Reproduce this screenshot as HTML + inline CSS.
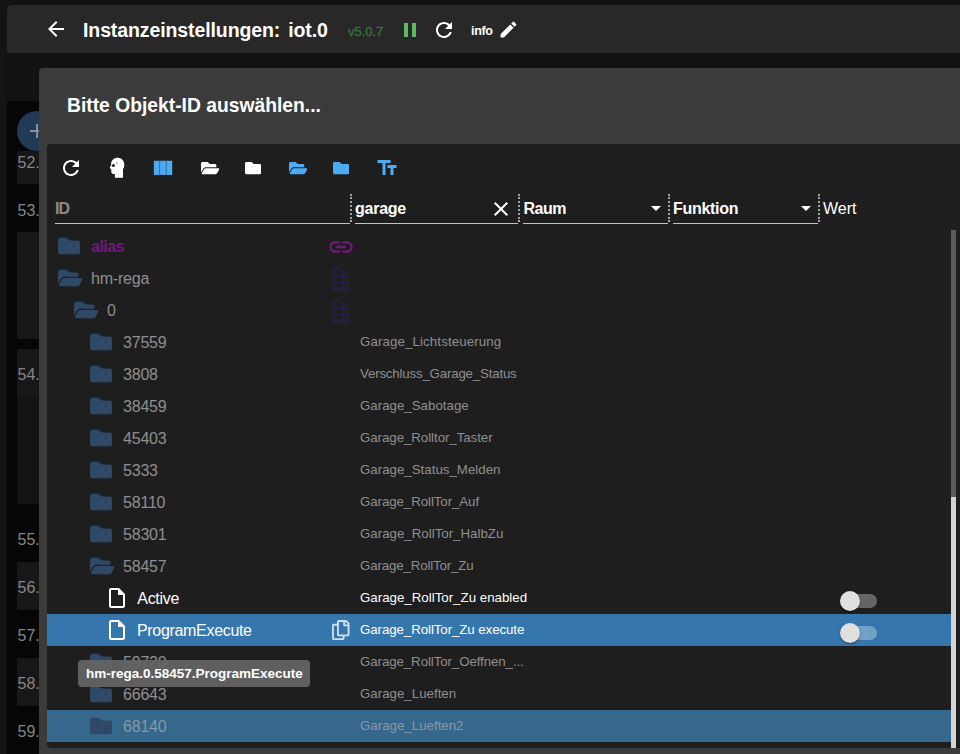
<!DOCTYPE html>
<html lang="de">
<head>
<meta charset="utf-8">
<title>Instanzeinstellungen: iot.0</title>
<style>
*{box-sizing:border-box;margin:0;padding:0}
html,body{width:960px;height:754px;overflow:hidden;background:#141414;font-family:"Liberation Sans",sans-serif;color:#fff}
.abs{position:absolute}
svg{display:block;position:absolute}
/* background page (dimmed by overlay) */
#page{position:absolute;left:7px;top:0;width:953px;height:754px;background:#121212}
#topbar{position:absolute;left:7px;top:5px;width:953px;height:48px;background:#282828;border-radius:4px 0 0 0}
#topbar .title{position:absolute;left:76px;top:12.500px;font-weight:bold;font-size:19.500px;line-height:24px;letter-spacing:-.1px;word-spacing:2.600px;white-space:nowrap}
#topbar .ver{position:absolute;left:341px;top:19px;font-size:13px;line-height:16px;color:#33753a;white-space:nowrap;letter-spacing:-0.05px;-webkit-text-stroke:.3px #33753a}
#topbar .info{position:absolute;left:464px;top:18px;font-size:12.5px;line-height:16px;font-weight:bold;letter-spacing:-0.3px;white-space:nowrap}
#list{position:absolute;left:7px;top:101px;width:60px;height:653px;background:#060606}
.li{position:absolute;left:10px;width:60px;background:#171717}
.num{position:absolute;left:10.500px;width:40px;font-size:16px;line-height:20px;color:#858585;white-space:nowrap}
#fab{position:absolute;left:17px;top:111px;width:40px;height:40px;border-radius:50%;background:#213a55}
/* dialog */
#dlg{position:absolute;left:39px;top:68px;width:940px;height:700px;background:#3b3b3b;border-radius:4px}
#dlg .dtitle{position:absolute;left:28px;top:26px;font-weight:bold;font-size:19.300px;line-height:24px;letter-spacing:0;white-space:nowrap}
#panel{position:absolute;left:47px;top:144px;width:930px;height:604px;background:#1e1e1e;border-radius:4px}
.hd{position:absolute;top:199px;font-size:16px;line-height:20px;font-weight:bold;white-space:nowrap}
.ul{position:absolute;top:223px;height:1px;background:#c2c2c2}
.sep{position:absolute;top:194px;height:28px;width:0;border-left:2px dotted #a4a4a4}
.row{position:absolute;left:47px;width:904px;height:32px}
.row .t{position:absolute;top:7px;font-size:16px;line-height:20px;white-space:nowrap;color:#8f8f8f;letter-spacing:-.2px}
.row .n{position:absolute;left:313px;top:7px;font-size:13.3px;line-height:18px;white-space:nowrap;color:#8f8f8f}
.fi{fill:#2f4866}
.sw{position:absolute;left:796px;top:12px;width:34px;height:14px;border-radius:7px;background:#656565}
.sw i{position:absolute;left:-3px;top:-3px;width:20px;height:20px;border-radius:50%;background:#e0e0e0;box-shadow:0 1px 2px rgba(0,0,0,.5)}
#tip{position:absolute;left:78px;top:660px;width:232px;height:27px;border-radius:4px;background:rgba(100,100,100,.94);font-size:13.5px;font-weight:bold;line-height:27px;padding-left:8px;white-space:nowrap;letter-spacing:0}
</style>
</head>
<body>
<div id="page"></div>
<div id="topbar">
<svg style="left:37px;top:12px" width="24" height="24" viewBox="0 0 24 24"><path fill="#fff" d="M20 11H7.83l5.590-5.590L12 4l-8 8 8 8 1.410-1.410L7.830 13H20v-2z"/></svg>
<div class="title">Instanzeinstellungen: iot.0</div>
<div class="ver">v5.0.7</div>
<svg style="left:391px;top:13px" width="24" height="24" viewBox="0 0 24 24"><path fill="#5fb964" d="M6 19h4V5H6v14zm8-14v14h4V5h-4z"/></svg>
<svg style="left:425px;top:13px" width="24" height="24" viewBox="0 0 24 24"><path fill="#fff" d="M17.650 6.350C16.200 4.900 14.210 4 12 4c-4.420 0-7.990 3.580-7.990 8s3.570 8 7.990 8c3.730 0 6.840-2.550 7.730-6h-2.080c-.82 2.330-3.040 4-5.650 4-3.310 0-6-2.690-6-6s2.690-6 6-6c1.660 0 3.140.69 4.220 1.780L13 11h7V4l-2.350 2.350z"/></svg>
<div class="info">info</div>
<svg style="left:491.400px;top:14.400px" width="21" height="21" viewBox="0 0 24 24"><path fill="#fff" d="M3 17.250V21h3.750L17.810 9.940l-3.750-3.750L3 17.250zM20.710 7.040c.39-.39.39-1.020 0-1.410l-2.340-2.340c-.39-.39-1.020-.39-1.410 0l-1.830 1.830 3.750 3.750 1.830-1.830z"/></svg>
</div>
<div id="list">
<div class="li" style="top:50px;height:33px"></div>
<div class="li" style="top:131px;height:107px"></div>
<div class="li" style="top:248px;height:48px"></div>
<div class="li" style="top:296px;height:107px;background:#141414"></div>
<div class="li" style="top:461px;height:48px"></div>
<div class="li" style="top:557px;height:48px"></div>
<div class="num" style="top:51.5px">52.</div>
<div class="num" style="top:99.5px">53.</div>
<div class="num" style="top:263.5px">54.</div>
<div class="num" style="top:428.5px">55.</div>
<div class="num" style="top:476.5px">56.</div>
<div class="num" style="top:524.5px">57.</div>
<div class="num" style="top:572.5px">58.</div>
<div class="num" style="top:620.5px">59.</div>
</div>
<div id="fab"><svg style="left:8px;top:8px" width="24" height="24" viewBox="0 0 24 24"><path fill="#8a8f95" d="M19 13h-6v6h-2v-6H5v-2h6V5h2v6h6v2z"/></svg></div>
<div id="dlg"><div class="dtitle">Bitte Objekt-ID auswählen...</div></div>
<div id="panel"></div>
<svg style="left:59px;top:156px" width="24" height="24" viewBox="0 0 24 24"><path fill="#fff" d="M17.650 6.350C16.200 4.900 14.210 4 12 4c-4.420 0-7.990 3.580-7.990 8s3.570 8 7.990 8c3.730 0 6.840-2.550 7.730-6h-2.080c-.82 2.330-3.040 4-5.650 4-3.310 0-6-2.690-6-6s2.690-6 6-6c1.660 0 3.140.69 4.220 1.780L13 11h7V4l-2.350 2.350z"/></svg>
<svg style="left:108px;top:156px" width="18" height="24" viewBox="0 0 18 24"><path fill="#fff" d="M3.100 8C3.100 4.200 6 1.700 9.700 1.700C13.600 1.700 16.300 4.800 16.300 8.700C16.300 10.500 15.900 12 15 13V21.700H6.900V18C5 18 3.600 17.900 3.400 16.500L3.100 13C2.300 12.800 1.700 12 1.900 11.200C2.100 10.300 2.600 10 3.100 10Z"/><circle cx="5.450" cy="9.600" r="1.500" fill="#1e1e1e"/><circle cx="8.850" cy="7.250" r=".650" fill="#555"/></svg>
<svg style="left:153px;top:160px" width="20" height="16" viewBox="0 0 20 16"><rect x=".800" y=".750" width="18.400" height="14.150" fill="#4dabf5"/><rect x="6.200" y=".750" width="1" height="14.150" fill="#2f6a96"/><rect x="12.700" y=".750" width="1" height="14.150" fill="#2f6a96"/></svg>
<svg style="left:200.5px;top:159.800px" width="18.450" height="16.400" viewBox="0 0 576 512"><path fill="#fff" d="M572.694 292.093L500.270 416.248A63.997 63.997 0 0 1 444.989 448H45.025c-18.523 0-30.064-20.093-20.731-36.093l72.424-124.155A64 64 0 0 1 152 256h399.964c18.523 0 30.064 20.093 20.730 36.093zM152 224h328v-48c0-26.510-21.490-48-48-48H272l-64-64H48C21.490 64 0 85.490 0 112v278.046l69.077-118.418C86.214 242.250 117.989 224 152 224z"/></svg>
<svg style="left:244.6px;top:159.800px" width="16.400" height="16.400" viewBox="0 0 512 512"><path fill="#fff" d="M464 128H272l-64-64H48C21.490 64 0 85.490 0 112v288c0 26.510 21.490 48 48 48h416c26.510 0 48-21.490 48-48V176c0-26.510-21.490-48-48-48z"/></svg>
<svg style="left:288.5px;top:159.800px" width="18.450" height="16.400" viewBox="0 0 576 512"><path fill="#4dabf5" d="M572.694 292.093L500.270 416.248A63.997 63.997 0 0 1 444.989 448H45.025c-18.523 0-30.064-20.093-20.731-36.093l72.424-124.155A64 64 0 0 1 152 256h399.964c18.523 0 30.064 20.093 20.730 36.093zM152 224h328v-48c0-26.510-21.490-48-48-48H272l-64-64H48C21.490 64 0 85.490 0 112v278.046l69.077-118.418C86.214 242.250 117.989 224 152 224z"/></svg>
<svg style="left:332.9px;top:159.800px" width="16.400" height="16.400" viewBox="0 0 512 512"><path fill="#4dabf5" d="M464 128H272l-64-64H48C21.490 64 0 85.490 0 112v288c0 26.510 21.490 48 48 48h416c26.510 0 48-21.490 48-48V176c0-26.510-21.490-48-48-48z"/></svg>
<svg style="left:375px;top:156px" width="24" height="24" viewBox="0 0 24 24"><path fill="#4dabf5" d="M2.500 4v3h5v12h3V7h5V4h-13zm19 5h-9v3h3v7h3v-7h3V9z"/></svg>
<div class="hd" style="left:55px;color:#8d8d8d;letter-spacing:-.9px">ID</div>
<div class="ul" style="left:55px;width:295px"></div>
<div class="sep" style="left:350px"></div>
<div class="hd" style="left:355px;letter-spacing:-.25px">garage</div>
<svg style="left:489px;top:197px" width="24" height="24" viewBox="0 0 24 24"><path fill="#fff" d="M19 6.410L17.590 5 12 10.590 6.410 5 5 6.410 10.590 12 5 17.590 6.410 19 12 13.410 17.590 19 19 17.590 13.410 12z"/></svg>
<div class="ul" style="left:355px;width:163px"></div>
<div class="sep" style="left:518px"></div>
<div class="hd" style="left:523.500px;letter-spacing:-.5px">Raum</div>
<svg style="left:644px;top:196px" width="24" height="24" viewBox="0 0 24 24"><path fill="#fff" d="M7 10l5 5 5-5z"/></svg>
<div class="ul" style="left:523px;width:145px"></div>
<div class="sep" style="left:668px"></div>
<div class="hd" style="left:673px;letter-spacing:-.3px">Funktion</div>
<svg style="left:794px;top:196px" width="24" height="24" viewBox="0 0 24 24"><path fill="#fff" d="M7 10l5 5 5-5z"/></svg>
<div class="ul" style="left:673px;width:145px"></div>
<div class="sep" style="left:818px"></div>
<div class="hd" style="left:823px;font-weight:normal;font-size:16px">Wert</div>
<div class="row" style="top:230px"><svg style="left:11px;top:5px" width="22" height="22" viewBox="0 0 512 512"><path class="fi" d="M464 128H272l-64-64H48C21.490 64 0 85.490 0 112v288c0 26.510 21.490 48 48 48h416c26.510 0 48-21.490 48-48V176c0-26.510-21.490-48-48-48z"/></svg><div class="t" style="left:44px;color:#70197a;font-weight:bold;letter-spacing:-.5px">alias</div><svg style="left:280.100px;top:3px" width="28" height="28" viewBox="0 0 24 24"><path fill="#70197a" d="M3.900 12c0-1.710 1.390-3.100 3.100-3.100h4V7H7c-2.760 0-5 2.240-5 5s2.240 5 5 5h4v-1.900H7c-1.710 0-3.100-1.390-3.100-3.100zM8 13h8v-2H8v2zm9-6h-4v1.900h4c1.710 0 3.100 1.390 3.100 3.100s-1.390 3.100-3.100 3.100h-4V17h4c2.760 0 5-2.240 5-5s-2.240-5-5-5z"/></svg></div>
<div class="row" style="top:262px"><svg style="left:10.5px;top:5px" width="24.75" height="22" viewBox="0 0 576 512"><path class="fi" d="M572.694 292.093L500.270 416.248A63.997 63.997 0 0 1 444.989 448H45.025c-18.523 0-30.064-20.093-20.731-36.093l72.424-124.155A64 64 0 0 1 152 256h399.964c18.523 0 30.064 20.093 20.730 36.093zM152 224h328v-48c0-26.510-21.490-48-48-48H272l-64-64H48C21.490 64 0 85.490 0 112v278.046l69.077-118.418C86.214 242.250 117.989 224 152 224z"/></svg><div class="t" style="left:44px">hm-rega</div><svg style="left:284px;top:5px" width="20" height="26" viewBox="0 0 20 26" fill="none" stroke="#2b2150" stroke-width="1"><path d="M3.200 1h5c5.500 2 8.700 9 9.200 21H3.200zM3.200 9.400h11M3.200 15.400h13.500M11.700 3v19M1.500 22h17"/><path stroke="#251e3c" d="M2 24.500h17" stroke-dasharray="2 1"/></svg></div>
<div class="row" style="top:294px"><svg style="left:26.5px;top:5px" width="24.75" height="22" viewBox="0 0 576 512"><path class="fi" d="M572.694 292.093L500.270 416.248A63.997 63.997 0 0 1 444.989 448H45.025c-18.523 0-30.064-20.093-20.731-36.093l72.424-124.155A64 64 0 0 1 152 256h399.964c18.523 0 30.064 20.093 20.730 36.093zM152 224h328v-48c0-26.510-21.490-48-48-48H272l-64-64H48C21.490 64 0 85.490 0 112v278.046l69.077-118.418C86.214 242.250 117.989 224 152 224z"/></svg><div class="t" style="left:60px">0</div><svg style="left:284px;top:5px" width="20" height="26" viewBox="0 0 20 26" fill="none" stroke="#2b2150" stroke-width="1"><path d="M3.200 1h5c5.500 2 8.700 9 9.200 21H3.200zM3.200 9.400h11M3.200 15.400h13.500M11.700 3v19M1.500 22h17"/><path stroke="#251e3c" d="M2 24.500h17" stroke-dasharray="2 1"/></svg></div>
<div class="row" style="top:326px"><svg style="left:43px;top:5px" width="22" height="22" viewBox="0 0 512 512"><path class="fi" d="M464 128H272l-64-64H48C21.490 64 0 85.490 0 112v288c0 26.510 21.490 48 48 48h416c26.510 0 48-21.490 48-48V176c0-26.510-21.490-48-48-48z"/></svg><div class="t" style="left:76px">37559</div><div class="n" style="left:313px;letter-spacing:0.11px">Garage_Lichtsteuerung</div></div>
<div class="row" style="top:358px"><svg style="left:43px;top:5px" width="22" height="22" viewBox="0 0 512 512"><path class="fi" d="M464 128H272l-64-64H48C21.490 64 0 85.490 0 112v288c0 26.510 21.490 48 48 48h416c26.510 0 48-21.490 48-48V176c0-26.510-21.490-48-48-48z"/></svg><div class="t" style="left:76px">3808</div><div class="n" style="left:313px;letter-spacing:-0.19px">Verschluss_Garage_Status</div></div>
<div class="row" style="top:390px"><svg style="left:43px;top:5px" width="22" height="22" viewBox="0 0 512 512"><path class="fi" d="M464 128H272l-64-64H48C21.490 64 0 85.490 0 112v288c0 26.510 21.490 48 48 48h416c26.510 0 48-21.490 48-48V176c0-26.510-21.490-48-48-48z"/></svg><div class="t" style="left:76px">38459</div><div class="n" style="left:313px">Garage_Sabotage</div></div>
<div class="row" style="top:422px"><svg style="left:43px;top:5px" width="22" height="22" viewBox="0 0 512 512"><path class="fi" d="M464 128H272l-64-64H48C21.490 64 0 85.490 0 112v288c0 26.510 21.490 48 48 48h416c26.510 0 48-21.490 48-48V176c0-26.510-21.490-48-48-48z"/></svg><div class="t" style="left:76px">45403</div><div class="n" style="left:313px;letter-spacing:-0.06px">Garage_Rolltor_Taster</div></div>
<div class="row" style="top:454px"><svg style="left:43px;top:5px" width="22" height="22" viewBox="0 0 512 512"><path class="fi" d="M464 128H272l-64-64H48C21.490 64 0 85.490 0 112v288c0 26.510 21.490 48 48 48h416c26.510 0 48-21.490 48-48V176c0-26.510-21.490-48-48-48z"/></svg><div class="t" style="left:76px">5333</div><div class="n" style="left:313px">Garage_Status_Melden</div></div>
<div class="row" style="top:486px"><svg style="left:43px;top:5px" width="22" height="22" viewBox="0 0 512 512"><path class="fi" d="M464 128H272l-64-64H48C21.490 64 0 85.490 0 112v288c0 26.510 21.490 48 48 48h416c26.510 0 48-21.490 48-48V176c0-26.510-21.490-48-48-48z"/></svg><div class="t" style="left:76px">58110</div><div class="n" style="left:313px;letter-spacing:-0.08px">Garage_RollTor_Auf</div></div>
<div class="row" style="top:518px"><svg style="left:43px;top:5px" width="22" height="22" viewBox="0 0 512 512"><path class="fi" d="M464 128H272l-64-64H48C21.490 64 0 85.490 0 112v288c0 26.510 21.490 48 48 48h416c26.510 0 48-21.490 48-48V176c0-26.510-21.490-48-48-48z"/></svg><div class="t" style="left:76px">58301</div><div class="n" style="left:313px">Garage_RollTor_HalbZu</div></div>
<div class="row" style="top:550px"><svg style="left:42.5px;top:5px" width="24.75" height="22" viewBox="0 0 576 512"><path class="fi" d="M572.694 292.093L500.270 416.248A63.997 63.997 0 0 1 444.989 448H45.025c-18.523 0-30.064-20.093-20.731-36.093l72.424-124.155A64 64 0 0 1 152 256h399.964c18.523 0 30.064 20.093 20.730 36.093zM152 224h328v-48c0-26.510-21.490-48-48-48H272l-64-64H48C21.490 64 0 85.490 0 112v278.046l69.077-118.418C86.214 242.250 117.989 224 152 224z"/></svg><div class="t" style="left:76px">58457</div><div class="n" style="left:313px;letter-spacing:-0.15px">Garage_RollTor_Zu</div></div>
<div class="row" style="top:582px"><svg style="left:57.500px;top:4px" width="24" height="24" viewBox="0 0 24 24"><path fill="#fff" d="M14 2H6c-1.100 0-1.990.900-1.990 2L4 20c0 1.100.890 2 1.990 2H18c1.100 0 2-.900 2-2V8l-6-6zM6 20V4h7v5h5v11H6z"/></svg><div class="t" style="left:90.300px;color:#fff;letter-spacing:-.3px">Active</div><div class="n" style="left:313px;color:#fff">Garage_RollTor_Zu enabled</div><div class="sw"><i></i></div></div>
<div class="row" style="top:614px;background:#3577ad"><svg style="left:57.500px;top:4px" width="24" height="24" viewBox="0 0 24 24"><path fill="#fff" d="M14 2H6c-1.100 0-1.990.900-1.990 2L4 20c0 1.100.890 2 1.990 2H18c1.100 0 2-.900 2-2V8l-6-6zM6 20V4h7v5h5v11H6z"/></svg><div class="t" style="left:90px;color:#fff;letter-spacing:-.32px">ProgramExecute</div><div class="n" style="left:313px;color:#fff;letter-spacing:-0.08px">Garage_RollTor_Zu execute</div><svg style="left:285px;top:6px" width="17.500" height="20" viewBox="0 0 448 512"><path fill="#cfdfec" d="M433.941 65.941l-51.882-51.882A48 48 0 0 0 348.118 0H176c-26.510 0-48 21.490-48 48v48H48c-26.510 0-48 21.490-48 48v320c0 26.510 21.490 48 48 48h224c26.510 0 48-21.490 48-48v-48h80c26.510 0 48-21.490 48-48V99.882a48 48 0 0 0-14.059-33.941zM266 464H54a6 6 0 0 1-6-6V150a6 6 0 0 1 6-6h74v224c0 26.510 21.490 48 48 48h96v42a6 6 0 0 1-6 6zm128-96H182a6 6 0 0 1-6-6V54a6 6 0 0 1 6-6h106v88c0 13.255 10.745 24 24 24h88v202a6 6 0 0 1-6 6zm6-256h-64V48h9.632c1.591 0 3.117.632 4.243 1.757l48.368 48.368a6 6 0 0 1 1.757 4.243V112z"/></svg><div class="sw" style="background:#72a1c6"><i></i></div></div>
<div class="row" style="top:646px"><svg style="left:43px;top:5px" width="22" height="22" viewBox="0 0 512 512"><path class="fi" d="M464 128H272l-64-64H48C21.490 64 0 85.490 0 112v288c0 26.510 21.490 48 48 48h416c26.510 0 48-21.490 48-48V176c0-26.510-21.490-48-48-48z"/></svg><div class="t" style="left:76px">59720</div><div class="n" style="left:313px;letter-spacing:-0.09px">Garage_RollTor_Oeffnen_...</div></div>
<div class="row" style="top:678px"><svg style="left:43px;top:5px" width="22" height="22" viewBox="0 0 512 512"><path class="fi" d="M464 128H272l-64-64H48C21.490 64 0 85.490 0 112v288c0 26.510 21.490 48 48 48h416c26.510 0 48-21.490 48-48V176c0-26.510-21.490-48-48-48z"/></svg><div class="t" style="left:76px">66643</div><div class="n" style="left:313px">Garage_Lueften</div></div>
<div class="row" style="top:710px;background:#36678c"><svg style="left:43px;top:5px" width="22" height="22" viewBox="0 0 512 512"><path class="fi" d="M464 128H272l-64-64H48C21.490 64 0 85.490 0 112v288c0 26.510 21.490 48 48 48h416c26.510 0 48-21.490 48-48V176c0-26.510-21.490-48-48-48z"/></svg><div class="t" style="left:76px;color:#8a98a4">68140</div><div class="n" style="left:313px;color:#8a98a4">Garage_Lueften2</div></div>
<div class="abs" style="left:951px;top:230px;width:5px;height:518px;background:#5c5c5c"></div>
<div class="abs" style="left:951px;top:497px;width:5px;height:251px;background:#d4d4d4"></div>
<div id="tip">hm-rega.0.58457.ProgramExecute</div>
</body>
</html>
